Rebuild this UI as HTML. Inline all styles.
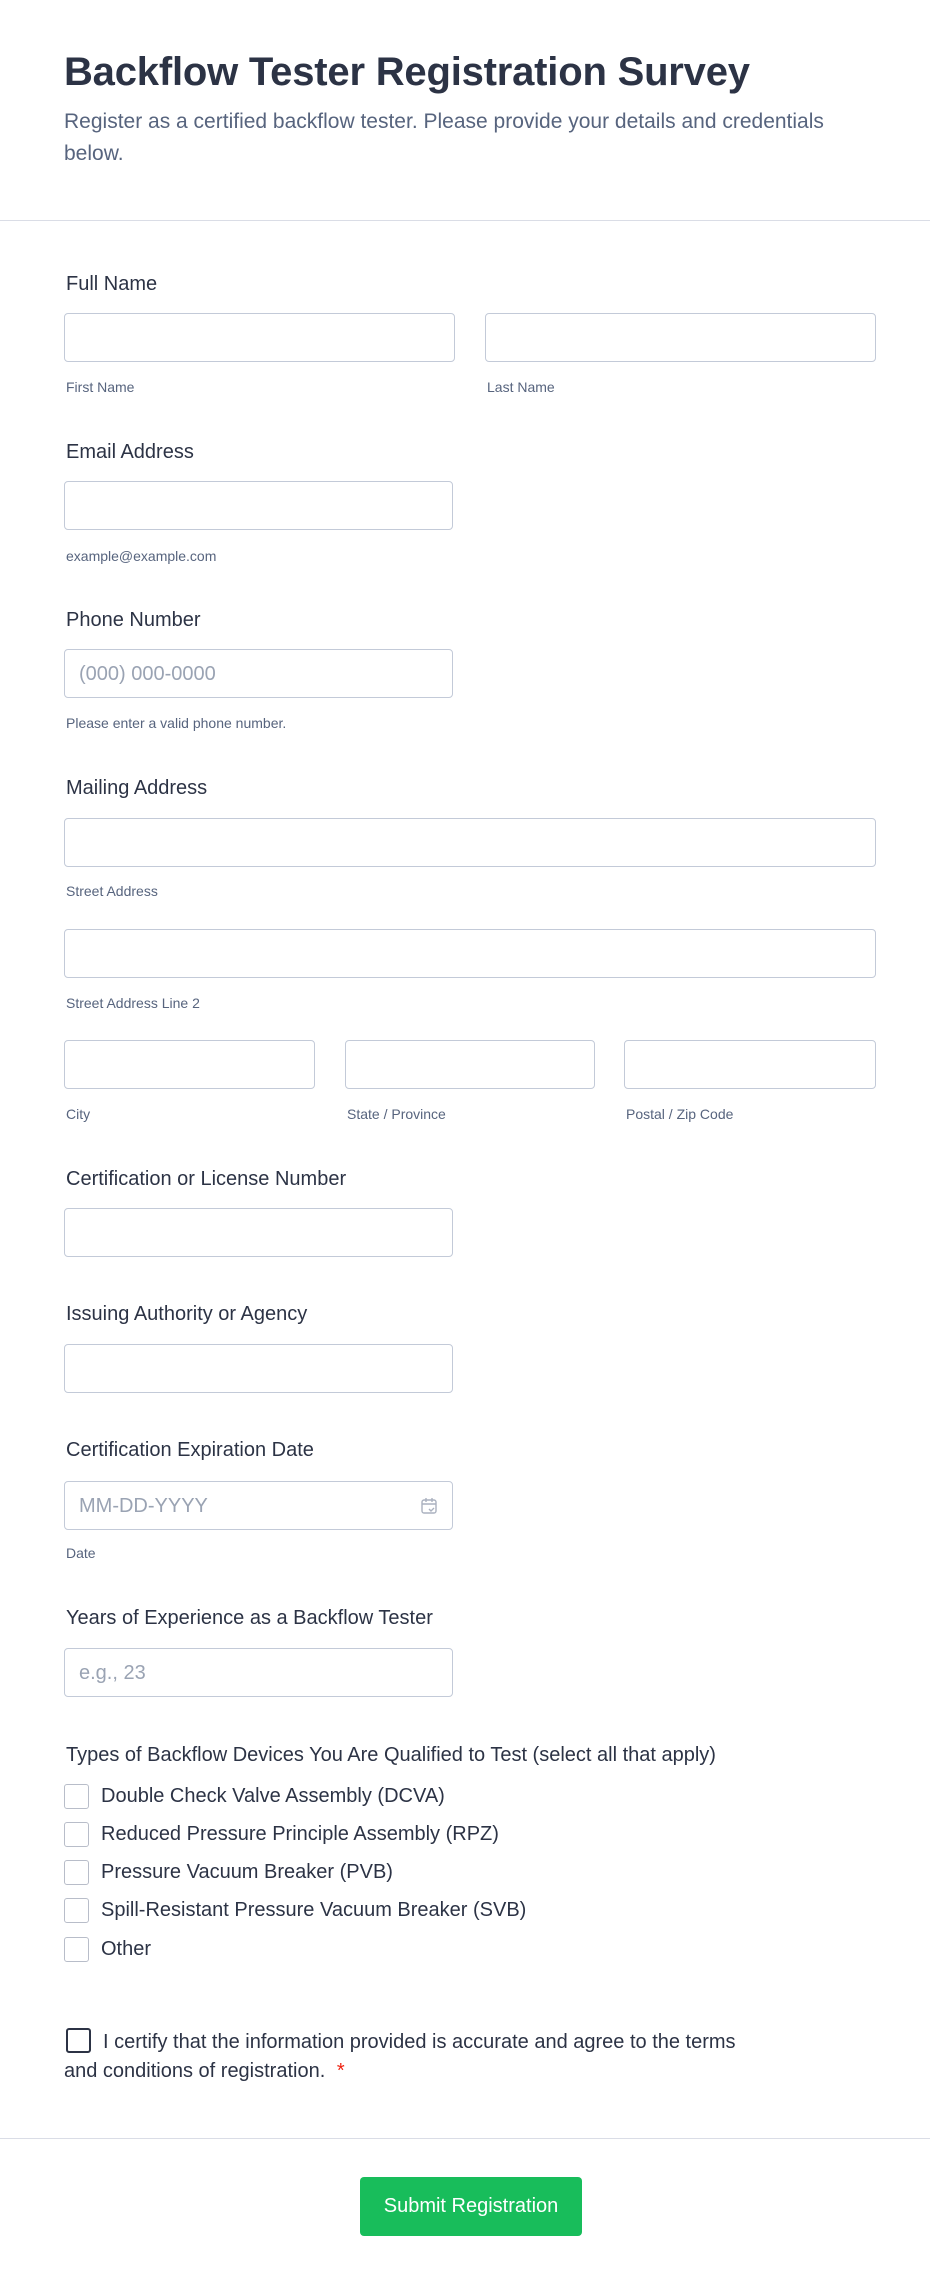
<!DOCTYPE html>
<html><head><meta charset="utf-8"><style>
*{box-sizing:border-box;margin:0;padding:0}
body{width:930px;height:2287px;background:#fff;font-family:"Liberation Sans",sans-serif;color:#2c3345;position:relative;overflow:hidden}
.a{position:absolute}
h1{position:absolute;left:64px;top:50px;font-size:40px;font-weight:bold;color:#2c3345;letter-spacing:-0.2px}
.sub{position:absolute;left:64px;top:106px;width:780px;font-size:21px;line-height:32px;color:#57647e}
.hr{position:absolute;left:0;width:930px;height:1px;background:#dadde6}
.lbl{position:absolute;left:66px;font-size:20px;color:#2c3345}
.in{position:absolute;height:49px;border:1px solid #c3cad8;border-radius:4px;background:#fff}
.sl{position:absolute;font-size:14px;color:#57647e}
.ph{position:absolute;left:14px;top:13px;font-size:20px;color:#9aa3b3}
.cb{position:absolute;left:64px;width:25px;height:25px;border:1px solid #b8bdc9;border-radius:3px}
.ct{position:absolute;left:101px;font-size:20px;color:#2c3345}
</style></head><body>
<h1>Backflow Tester Registration Survey</h1>
<div class="sub">Register as a certified backflow tester. Please provide your details and credentials below.</div>
<div class="hr" style="top:220px"></div>

<div class="lbl" style="top:273px">Full Name</div>
<div class="in" style="left:64px;top:313px;width:391px"></div>
<div class="in" style="left:485px;top:313px;width:391px"></div>
<div class="sl" style="left:66px;top:379px">First Name</div>
<div class="sl" style="left:487px;top:379px">Last Name</div>

<div class="lbl" style="top:441px">Email Address</div>
<div class="in" style="left:64px;top:481px;width:389px"></div>
<div class="sl" style="left:66px;top:548px">example@example.com</div>

<div class="lbl" style="top:609px">Phone Number</div>
<div class="in" style="left:64px;top:649px;width:389px"><span class="ph">(000) 000-0000</span></div>
<div class="sl" style="left:66px;top:715px">Please enter a valid phone number.</div>

<div class="lbl" style="top:777px">Mailing Address</div>
<div class="in" style="left:64px;top:818px;width:812px"></div>
<div class="sl" style="left:66px;top:883px">Street Address</div>
<div class="in" style="left:64px;top:929px;width:812px"></div>
<div class="sl" style="left:66px;top:995px">Street Address Line 2</div>
<div class="in" style="left:64px;top:1040px;width:251px"></div>
<div class="in" style="left:345px;top:1040px;width:250px"></div>
<div class="in" style="left:624px;top:1040px;width:252px"></div>
<div class="sl" style="left:66px;top:1106px">City</div>
<div class="sl" style="left:347px;top:1106px">State / Province</div>
<div class="sl" style="left:626px;top:1106px">Postal / Zip Code</div>

<div class="lbl" style="top:1168px">Certification or License Number</div>
<div class="in" style="left:64px;top:1208px;width:389px"></div>

<div class="lbl" style="top:1303px">Issuing Authority or Agency</div>
<div class="in" style="left:64px;top:1344px;width:389px"></div>

<div class="lbl" style="top:1439px">Certification Expiration Date</div>
<div class="in" style="left:64px;top:1481px;width:389px"><span class="ph">MM-DD-YYYY</span>
<svg class="a" style="left:355px;top:15px" width="18" height="18" viewBox="0 0 18 18" fill="none" stroke="#aab1bf" stroke-width="1.4"><rect x="2" y="3" width="14" height="13" rx="2"/><path d="M2 7h14M6 1v4M12 1v4M9 12l2 2 3-3"/></svg></div>
<div class="sl" style="left:66px;top:1545px">Date</div>

<div class="lbl" style="top:1607px">Years of Experience as a Backflow Tester</div>
<div class="in" style="left:64px;top:1648px;width:389px"><span class="ph">e.g., 23</span></div>

<div class="lbl" style="top:1744px">Types of Backflow Devices You Are Qualified to Test (select all that apply)</div>
<div class="cb" style="top:1784px"></div><div class="ct" style="top:1785px">Double Check Valve Assembly (DCVA)</div>
<div class="cb" style="top:1822px"></div><div class="ct" style="top:1823px">Reduced Pressure Principle Assembly (RPZ)</div>
<div class="cb" style="top:1860px"></div><div class="ct" style="top:1861px">Pressure Vacuum Breaker (PVB)</div>
<div class="cb" style="top:1898px"></div><div class="ct" style="top:1899px">Spill-Resistant Pressure Vacuum Breaker (SVB)</div>
<div class="cb" style="top:1937px"></div><div class="ct" style="top:1938px">Other</div>

<div class="a" style="left:66px;top:2028px;width:25px;height:25px;border:2px solid #2c3345;border-radius:3px"></div>
<div class="a" style="left:64px;top:2028px;width:690px;font-size:20px;line-height:29px;color:#2c3345;text-indent:39px">I certify that the information provided is accurate and agree to the terms and conditions of registration. <span style="color:#e21;margin-left:6px">*</span></div>

<div class="hr" style="top:2138px"></div>
<div class="a" style="left:360px;top:2177px;width:222px;height:59px;background:#18bd5b;border-radius:4px;color:#fff;font-size:20px;text-align:center;line-height:59px">Submit Registration</div>
</body></html>
